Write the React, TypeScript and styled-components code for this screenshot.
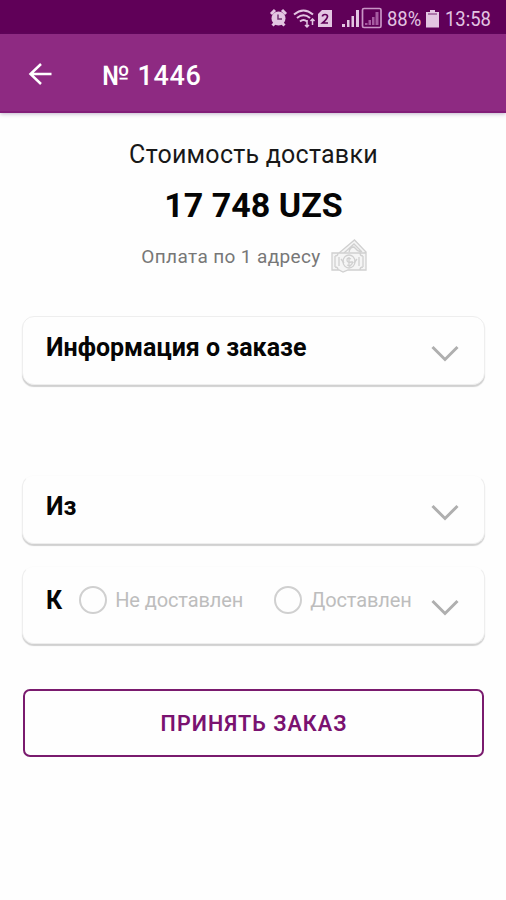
import React from "react";
import styled, { createGlobalStyle } from "styled-components";

const GlobalStyle = createGlobalStyle`
  * { box-sizing: border-box; }
  body { margin: 0; background: #fefefe; font-family: Roboto, "Noto Sans", sans-serif; }
`;

const Screen = styled.div`
  width: 506px;
  height: 900px;
  overflow: hidden;
  display: flex;
  flex-direction: column;
  background: #fefefe;
`;

const StatusBar = styled.div`
  height: 34px;
  flex: none;
  background: #600058;
  display: flex;
  align-items: center;
  justify-content: flex-end;
  padding: 3px 15px 0 0;
  color: #e3c5e2;
`;

const StatusIcons = styled.svg`
  display: block;
  flex: none;
`;

const StatusGap = styled.span<{ $width: number }>`
  flex: none;
  width: ${(p) => p.$width}px;
`;

const StatusText = styled.span<{ $width: number }>`
  width: ${(p) => p.$width}px;
  font-size: 20.5px;
  line-height: 24px;
  white-space: nowrap;
  transform: scaleX(0.9);
  transform-origin: left center;
`;

const Header = styled.header`
  height: 79px;
  flex: none;
  display: flex;
  align-items: center;
  padding: 3px 0 0 28px;
  gap: 50px;
  background: #8e2a82;
  border-bottom: 2px solid #831d78;
  box-shadow: 0 1px 4px rgba(80, 50, 110, 0.35);
`;

const Title = styled.h1`
  margin: 3px 0 0;
  color: #fff;
  font-size: 27px;
  line-height: 32px;
  font-weight: 500;
  letter-spacing: 0.65px;
`;

const Summary = styled.section`
  flex: none;
  height: 203px;
  padding: 25px 0 0 1px;
  display: flex;
  flex-direction: column;
  align-items: center;
  color: #050505;
`;

const Caption = styled.div`
  font-size: 25px;
  line-height: 34px;
  letter-spacing: 0.25px;
  color: #181818;
`;

const Price = styled.div`
  margin-top: 13px;
  font-size: 34px;
  line-height: 40px;
  font-weight: 700;
`;

const Payment = styled.div`
  margin-top: 12px;
  padding-left: 1px;
  display: flex;
  align-items: center;
  gap: 10px;
  height: 38px;
  font-size: 19px;
  letter-spacing: 0.37px;
  color: #777;
`;

const Card = styled.section<{ $height: number; $gap: number; $faint?: boolean }>`
  flex: none;
  height: ${(p) => p.$height}px;
  margin: 0 21px ${(p) => p.$gap}px 22px;
  padding: 0 25px 0 23px;
  display: flex;
  align-items: center;
  border: 1px solid #eee;
  border-top-color: ${(p) => (p.$faint ? "#fcfcfc" : "#eee")};
  border-radius: 12px;
  background: #fefefe;
  box-shadow: 0 2px 1px rgba(0, 0, 0, 0.18);
`;

const CardTitle = styled.h2<{ $lift: number }>`
  margin: 0 0 ${(p) => p.$lift}px;
  font-size: 25px;
  line-height: 30px;
  font-weight: 700;
  color: #050505;
  white-space: nowrap;
`;

const Choices = styled.div`
  display: flex;
  margin: 0 0 11px 17px;
  gap: 31px;
`;

const Choice = styled.label`
  display: flex;
  align-items: center;
  gap: 8px;
  font-size: 20px;
  line-height: 28px;
  letter-spacing: -0.1px;
  color: #bdbdbd;
  white-space: nowrap;
`;

const Radio = styled.span`
  width: 28px;
  height: 28px;
  border: 2px solid #d0d0d0;
  border-radius: 50%;
`;

const Chevron = styled.svg`
  flex: none;
  display: block;
  margin: 6px 0 0 auto;
`;

const AcceptButton = styled.button`
  flex: none;
  height: 68px;
  margin: 0 22px 0 23px;
  padding: 0 0 0 1px;
  border: 2px solid #7a1b6e;
  border-radius: 7px;
  background: transparent;
  color: #7a1270;
  font-family: Roboto, sans-serif;
  font-size: 21.5px;
  font-weight: 600;
  letter-spacing: 1.05px;
`;

const ChevronIcon = () => (
  <Chevron width="28" height="18" viewBox="0 0 28 18" fill="none" stroke="#afafaf" strokeWidth="3">
    <path d="M1.500 2 14 14.500 26.500 2" />
  </Chevron>
);

const IndicatorIcons = () => (
  <StatusIcons width="114" height="24" viewBox="0 0 114 24">
    <circle cx="9.500" cy="11.500" r="7" fill="currentColor" />
    <path d="M2 7 6 3M17 7l-4-4M3.500 18.500l3-3M15.500 18.500l-3-3" stroke="currentColor" strokeWidth="3" />
    <path d="M9 7.500V12h4" fill="none" stroke="#713271" strokeWidth="1.500" />
    <path
      d="M53 3h10v17H49V7zM73 20h3v-3h-3zM78 20h2.500v-7H78zM82.500 20H85V9h-2.500zM87 20h3V3h-3z"
      fill="currentColor"
    />
    <g fill="none" stroke="currentColor" strokeWidth="2">
      <path d="M25 7.500q9.500-8 19 0M28 11q6.500-5.500 13 0M31 14.500q3.500-3 7 0" />
      <path d="M38 13v7m-2-2 2 2 2-2M43.500 18v-6m-2 2 2-2 2 2" strokeWidth="1.500" />
    </g>
    <path d="M53.500 9.500q0-2 2.500-2t2.500 2-5 6.500h5.500" fill="none" stroke="#600058" strokeWidth="1.700" />
    <rect x="93.500" y="1.500" width="18.500" height="19" rx="1.500" fill="none" stroke="#c995c6" strokeWidth="1.700" />
    <path d="M96 18h2.500v-2H96zM99.500 18h2.500v-5h-2.500zM103 18h2.500v-8H103zM106.500 18h3V5h-3z" fill="#a65ba1" />
  </StatusIcons>
);

const BatteryIcon = () => (
  <StatusIcons width="13" height="20" viewBox="0 0 13 20">
    <path d="M4 1h5v2h4v15.500H0V3h4z" fill="currentColor" />
    <path d="M2 5h9" stroke="#9a5a97" strokeWidth="1.500" />
  </StatusIcons>
);

const BackIcon = () => (
  <svg width="24" height="24" viewBox="0 0 24 24" fill="none" stroke="#fff" strokeWidth="2.500">
    <path d="M23.500 12H3M13 2 2.500 12 13 22" />
  </svg>
);

const MoneyIcon = () => (
  <svg width="36" height="34" viewBox="0 0 36 34" fill="none" stroke="#d0d0d0" strokeWidth="1.300">
    <path d="m8 14 15.500-13L35 13l-3 3M13 14 23 5l8 8M18 13q1-5 5-5 3 4 7 5" fill="#f5f5f5" />
    <path d="M1 14h34v17H17l-5 2-4-2H1z" fill="#f5f5f5" />
    <path d="M4 17q3 0 3-3M4 28q3 0 3 3M32 17q-3 0-3-3M32 28q-3 0-3 3M4 17v11M32 17v11M8 18v9M28 18v9" />
    <ellipse cx="18" cy="22.500" rx="6" ry="6.500" />
    <path d="M20 20q-4-2-4 1t4 2-1 4l-3-1M18 18v10M10 20l3 4M26 20l-3 4" />
  </svg>
);

export default function App() {
  return (
    <>
      <GlobalStyle />
      <Screen>
        <StatusBar>
          <IndicatorIcons />
          <StatusGap $width={4} />
          <StatusText $width={39}>88%</StatusText>
          <BatteryIcon />
          <StatusGap $width={6} />
          <StatusText $width={46}>13:58</StatusText>
        </StatusBar>
        <Header>
          <BackIcon />
          <Title>№ 1446</Title>
        </Header>
        <Summary>
          <Caption>Стоимость доставки</Caption>
          <Price>17 748 UZS</Price>
          <Payment>
            <span>Оплата по 1 адресу</span>
            <MoneyIcon />
          </Payment>
        </Summary>
        <Card $height={69} $gap={90}>
          <CardTitle $lift={6}>Информация о заказе</CardTitle>
          <ChevronIcon />
        </Card>
        <Card $height={69} $gap={22} $faint>
          <CardTitle $lift={6}>Из</CardTitle>
          <ChevronIcon />
        </Card>
        <Card $height={78} $gap={45} $faint>
          <CardTitle $lift={8}>К</CardTitle>
          <Choices>
            <Choice><Radio />Не доставлен</Choice>
            <Choice><Radio />Доставлен</Choice>
          </Choices>
          <ChevronIcon />
        </Card>
        <AcceptButton>ПРИНЯТЬ ЗАКАЗ</AcceptButton>
      </Screen>
    </>
  );
}
